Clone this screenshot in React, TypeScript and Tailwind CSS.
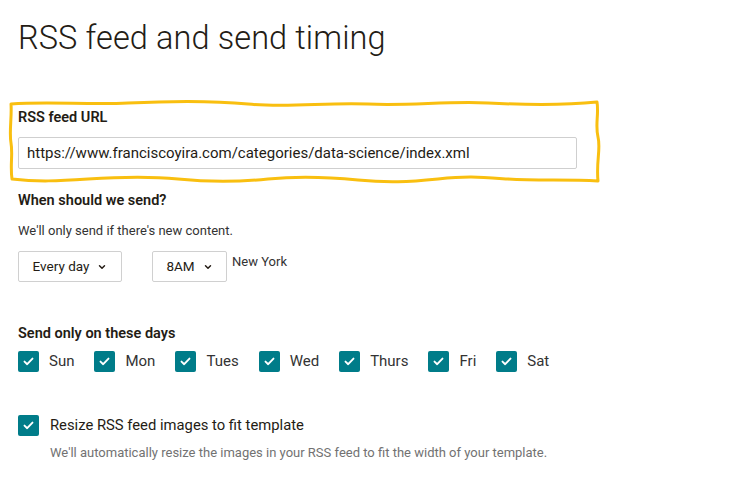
import React from 'react';
import { ChevronDown } from 'lucide-react';

const days = ['Sun', 'Mon', 'Tues', 'Wed', 'Thurs', 'Fri', 'Sat'];

// Checked teal box
const Check = () => (
  <span className="flex h-[21px] w-[21px] shrink-0 items-center justify-center rounded-[2px] bg-[#007c89]">
    <svg width="11" height="9" viewBox="0 0 11 9" fill="none">
      <path d="M1.5 4.6 L4.2 7.2 L9.5 1.6" stroke="white" strokeWidth="1.9" strokeLinecap="round" strokeLinejoin="round" />
    </svg>
  </span>
);

const Select = ({ label, className }: { label: string; className: string }) => (
  <div className={`flex h-[31px] items-center justify-center gap-[8px] rounded-[2px] border border-[#d0d0d0] bg-white text-[13.5px] text-[#241c15] ${className}`}>
    <span>{label}</span>
    <ChevronDown size={10} strokeWidth={3.5} />
  </div>
);

export default function App() {
  return (
    <div className="min-h-[481px] w-[750px] bg-white pl-[18px] pt-[19px] text-[#241c15]" style={{ fontFamily: 'Roboto, "Liberation Sans", sans-serif' }}>
      <h1 className="text-[32.5px] leading-[38px] font-light tracking-[0.1px] text-[#241c15]">RSS feed and send timing</h1>

      {/* highlighted URL field */}
      <div className="relative mt-[51px] w-[559px]">
        <svg className="pointer-events-none absolute left-[-10px] top-[-9px]" width="594" height="88" viewBox="0 0 594 88" fill="none">
          <path
            d="M3 5 C40 2 80 6 120 4 S200 1 240 5 S320 3 360 5 S440 2 480 4 S560 6 589 3
               C591 15 587 26 590 38 S588 62 590 82
               C560 80 530 82 500 80 S460 77 430 80 S380 84 350 81 S290 77 260 80 S200 83 170 80 S110 78 80 80 S30 83 4 80
               C2 66 5 55 3 44 S4 18 3 5 Z"
            stroke="#f9bf10"
            strokeWidth="3"
            strokeLinejoin="round"
          />
        </svg>
        <div className="text-[14.5px] leading-[20px] font-semibold">RSS feed URL</div>
        <div className="mt-[9px] flex h-[32px] w-[559px] items-center rounded-[2px] border border-[#cfcfcf] px-[8px] text-[15px] text-[#241c15]">
          https://www.franciscoyira.com/categories/data-science/index.xml
        </div>
      </div>

      <div className="mt-[22px] text-[14.5px] leading-[20px] font-semibold">When should we send?</div>
      <div className="mt-[11px] text-[13px] leading-[18px] text-[#333]">We'll only send if there's new content.</div>

      <div className="mt-[11px] flex items-start">
        <Select label="Every day" className="w-[104px]" />
        <Select label="8AM" className="ml-[30px] w-[75px]" />
        <span className="ml-[5px] text-[13px] leading-[22px] text-[#333]">New York</span>
      </div>

      <div className="mt-[42px] text-[14.5px] leading-[20px] font-semibold">Send only on these days</div>
      <div className="mt-[7px] flex items-center gap-[20px]">
        {days.map((d) => (
          <div key={d} className="flex items-center gap-[10px]">
            <Check />
            <span className="text-[15px] leading-[21px] text-[#333]">{d}</span>
          </div>
        ))}
      </div>

      <div className="mt-[42px] flex items-center gap-[11px]">
        <Check />
        <span className="text-[14.8px] leading-[22px] text-[#241c15]">Resize RSS feed images to fit template</span>
      </div>
      <div className="ml-[32px] mt-[8px] text-[13px] leading-[18px] text-[#727272]">
        We'll automatically resize the images in your RSS feed to fit the width of your template.
      </div>
    </div>
  );
}
